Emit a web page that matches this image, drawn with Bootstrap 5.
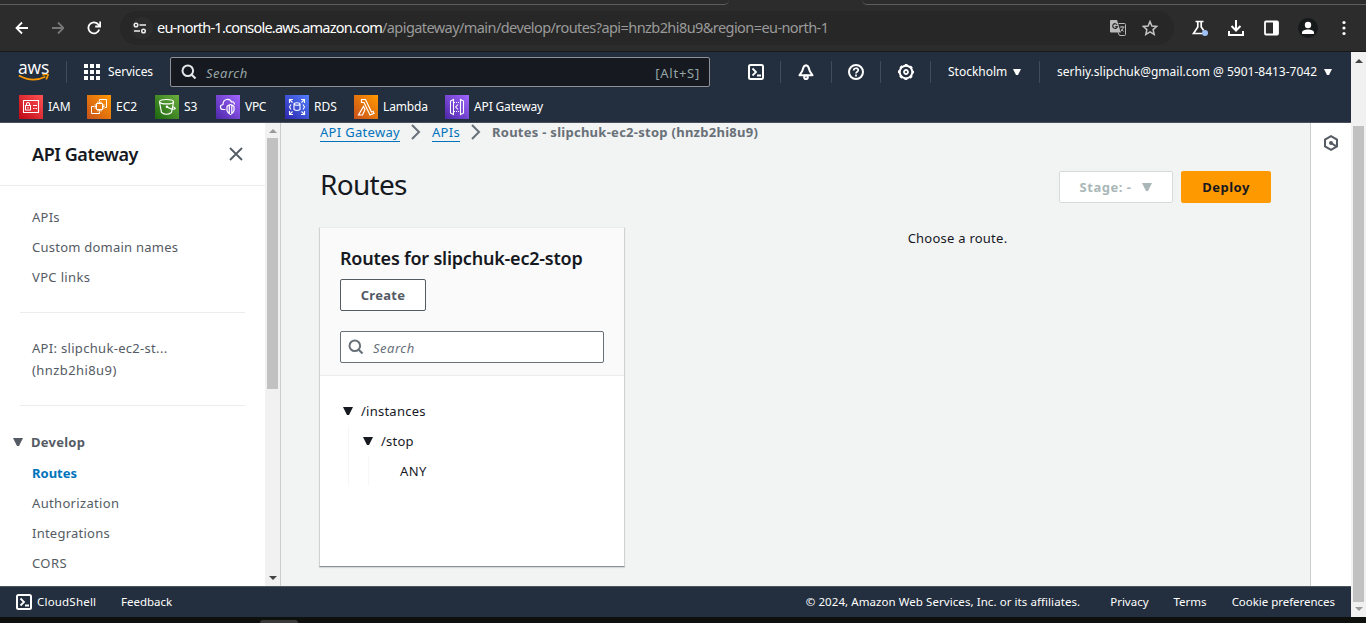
<!DOCTYPE html>
<html lang="en">
<head>
<meta charset="utf-8">
<title>API Gateway - Routes</title>
<link href="https://cdn.jsdelivr.net/npm/bootstrap@5.3.0/dist/css/bootstrap.min.css" rel="stylesheet">
<style>
body{height:623px;overflow:hidden;background:#0e100e;font:13px/22px "Noto Sans",sans-serif;letter-spacing:.24px;color:#16191f;display:flex;flex-direction:column}
svg{display:block;flex:none}
a{text-decoration:none;color:inherit}
.chrome{height:52px;background:#2c2c2c;border-bottom:1px solid #161819}
.tabstrip{height:5px;background:#2c2c2c}
.tab-l{width:729px;border-bottom:1px solid #5e5e5e;border-bottom-right-radius:7px}
.tab-r{width:504px;border-bottom:1px solid #5e5e5e;border-bottom-left-radius:7px}
.toolbar{height:46px;padding-left:14px}
.omni{height:34px;width:1054px;background:#272727;border-radius:17px;padding-left:7px}
.site{width:22px;height:22px;border-radius:50%;background:#2d2d2d}
.url{font:14.5px/20px "Noto Sans",sans-serif;color:#fff;margin:-2px 0 0 4px;white-space:nowrap;letter-spacing:-.78px}
.url span{color:#9a9a9a;letter-spacing:-.57px}
.view{height:565px}
.page-col{width:1351px}
.aws-head{height:71px;background:#232f3e;border-bottom:1px solid #4a4f5b;color:#fff;font-size:12px;line-height:16px;letter-spacing:0}
.row1{height:40px}
.vsep{width:1px;height:22px;background:#414d5c;flex:none}
.awslogo{width:31px;margin-left:18px}
.awslogo b{font:500 17.5px/12px "Open Sans",sans-serif;display:block;height:13px;margin-top:-2px;letter-spacing:-.2px}
.gsearch{width:540px;height:30px;border:1px solid #8d9096;border-radius:2px;background:#16191f;color:#95a5a6;font-size:13px;padding:0 9px 0 10px}
.txt-in{font-size:13px;letter-spacing:.5px;padding-top:2px}
.ico{width:50px}
.favs{height:30px;padding-left:19px}
.fav{gap:5px}
.side{width:265px;background:#fff;color:#545b64}
.side-head{height:63px;border-bottom:1px solid #eaeded;padding:0 21px 0 32px}
.h-side{font-size:18px;line-height:22px;font-weight:600;color:#16191f;letter-spacing:-.45px}
.side-link{height:30px;line-height:30px;padding-left:32px;display:block}
.rule{height:1px;background:#eaeded;margin:0 20px}
.sb{width:15px;background:#f1f1f1;flex:none}
.thumb{width:11px;background:#c1c1c1}
.edge{width:1px;background:#c9cdcf;flex:none}
.content-area{width:1029px;background:#f2f3f3;padding:0 39px}
.crumb{font-size:13px;line-height:18px;height:20px;letter-spacing:.3px}
.crumb a{color:#0073bb;border-bottom:1px solid #0073bb;height:19px;line-height:18px}
.title{font-size:28px;line-height:34px;font-weight:400;letter-spacing:-.7px;margin-top:-6px}
.b-aws{height:32px;border-radius:2px;font-weight:700;font-size:13px;line-height:30px;padding:0;text-align:center;border:1px solid;letter-spacing:.5px}
.panel-box{width:306px;height:340px;margin-left:-1px;border:1px solid #cfd3d3;border-top-color:#eaeded;border-bottom-color:#879196;background:#fff;box-shadow:0 1px 1px #d5d9d9}
.panel-top{height:148px;background:#fafafa;border-bottom:1px solid #eaeded;padding:19px 20px 0}
.psearch{height:32px;border:1px solid #687078;border-radius:2px;background:#fff;color:#687078;padding-left:7px}
.node{height:30px;line-height:30px}
.branch{border-left:1px solid #f7f7f7}
.foot{height:31px;background:#232f3e;border-top:1px solid #4a555c;color:#fff;font-size:11.5px;line-height:16px;letter-spacing:0}
</style>
</head>
<body>
<svg width="0" height="0" style="position:absolute"><defs>
<linearGradient id="gr" x1="0" y1="1" x2="1" y2="0"><stop stop-color="#bd0816"/><stop offset="1" stop-color="#ff5252"/></linearGradient>
<linearGradient id="go" x1="0" y1="1" x2="1" y2="0"><stop stop-color="#c8511b"/><stop offset="1" stop-color="#f90"/></linearGradient>
<linearGradient id="gg" x1="0" y1="1" x2="1" y2="0"><stop stop-color="#1b660f"/><stop offset="1" stop-color="#6cae3e"/></linearGradient>
<linearGradient id="gp" x1="0" y1="1" x2="1" y2="0"><stop stop-color="#4d27a8"/><stop offset="1" stop-color="#a166ff"/></linearGradient>
<linearGradient id="gb" x1="0" y1="1" x2="1" y2="0"><stop stop-color="#2e27ad"/><stop offset="1" stop-color="#527fff"/></linearGradient>
<symbol id="shell" viewBox="0 0 16 16"><rect x="1" y="1" width="14" height="14" rx="1.500" fill="none" stroke="#fff" stroke-width="2"/><path d="M4.500 4.500 8 8 4.500 11.500M9 11.500h4" fill="none" stroke="#fff" stroke-width="1.800"/></symbol>
<symbol id="mag" viewBox="0 0 16 16"><circle cx="6.800" cy="6.800" r="5.300" fill="none" stroke="currentColor" stroke-width="2"/><path d="m10.500 10.500 4 4" stroke="currentColor" stroke-width="2.200"/></symbol>
</defs></svg>

<header class="chrome">
  <div class="tabstrip d-flex justify-content-between"><div class="tab-l"></div><div class="tab-r"></div></div>
  <div class="toolbar d-flex align-items-center">
    <svg width="16" height="16" fill="none" stroke="#fff" stroke-width="1.800"><path d="M14 8H3M8 2.500 2.500 8 8 13.500"/></svg>
    <svg style="margin:0 23px 0 22px" width="12" height="16" viewBox="2 0 12 16" fill="none" stroke="#777" stroke-width="1.800"><path d="M2 8h11M8 2.500 13.500 8 8 13.500"/></svg>
    <svg width="14" height="16" viewBox="1 0 14 16" fill="none" stroke="#fff" stroke-width="1.800"><path d="M13.200 9.500A5.500 5.500 0 1 1 12 4.200l2 2M14.200 1.500v5h-5"/></svg>
    <div class="omni d-flex align-items-center" style="margin-left:19px">
      <div class="site d-flex align-items-center justify-content-center" style="margin-left:4px"><svg style="margin-right:8px;margin-left:4px" width="14" height="12" fill="none" stroke="#eee" stroke-width="1.500"><circle cx="3" cy="3" r="1.800"/><path d="M6.500 3H13M1 9h6"/><circle cx="10.500" cy="9" r="1.800"/></svg></div>
      <div class="url">eu-north-1.console.aws.amazon.com<span>/apigateway/main/develop/routes?api=hnzb2hi8u9&amp;region=eu-north-1</span></div>
      <svg class="ms-auto" width="18" height="18" viewBox="0 0 18 18"><path d="M9.500 4.500H15.500q1 0 1 1v10q0 1-1 1H10.500L9 13.500" fill="none" stroke="#bbb"/><path d="M2 1h6l3.800 12.500H2q-1 0-1-1V2q0-1 1-1z" fill="#bbb"/><path d="M8 5.800a2.300 2.300 0 1 0 .3 1.700H6.300" fill="none" stroke="#272727" stroke-width="1.200"/><path d="M11 8h4.500M13 7v1M14.500 8q-.5 2.500-2.800 4.500M12.200 9.800l2.300 2.700" fill="none" stroke="#bbb"/></svg>
      <svg style="margin:0 16px 0 15px" width="16" height="16" viewBox="0 0 16 16"><path d="m8 1.500 1.900 4.500 4.900.4-3.700 3.200 1.100 4.800L8 11.900l-4.200 2.500 1.100-4.800L1.200 6.400 6.100 6z" fill="none" stroke="#c4c4c4" stroke-width="1.500"/></svg>
    </div>
    <svg style="margin-left:17px" width="18" height="18" viewBox="0 0 18 18"><path d="M4.500 2.500h8M6.800 3v5L2.500 14.500h9M10.200 3v5l2.500 3.500" fill="none" stroke="#fff" stroke-width="1.700"/><circle cx="14" cy="14" r="3" fill="#a0c2f9"/></svg>
    <svg style="margin-left:18px" width="18" height="18" fill="none" stroke="#fff" stroke-width="2"><path d="M9 1v10M4.500 7 9 11.500 13.500 7M2 12v4h14v-4"/></svg>
    <svg style="margin-left:19px" width="16" height="16"><rect x="1" y="1.500" width="13" height="13" rx="1" fill="none" stroke="#fff" stroke-width="1.800"/><path d="M9 1h5v14H9z" fill="#fff"/></svg>
    <svg style="margin-left:18px" width="20" height="20"><circle cx="10" cy="10" r="10" fill="#171a1b"/><circle cx="10" cy="7" r="3.200" fill="#fff"/><path d="M4 16v-1.500c0-2 3-3 6-3s6 1 6 3V16z" fill="#fff"/></svg>
    <svg style="margin-left:24px" width="4" height="16" fill="#fff"><circle cx="2" cy="2.500" r="1.600"/><circle cx="2" cy="8" r="1.600"/><circle cx="2" cy="13.500" r="1.600"/></svg>
  </div>
</header>

<div class="view d-flex">
  <div class="page-col d-flex flex-column">
    <nav class="aws-head">
      <div class="row1 d-flex align-items-center">
        <div class="awslogo"><b>aws</b><svg width="32" height="8" fill="none" stroke="#f90" stroke-width="1.700"><path d="M.8 1.500q14 7.500 26.500 1.200M24.500 1q6-1.500 5.500 0t-1.800 4.500"/></svg></div>
        <div class="vsep" style="margin:0 17px"></div>
        <svg width="16" height="16" fill="#fff"><path d="M0 0h4v4H0zM6 0h4v4H6zM12 0h4v4h-4zM0 6h4v4H0zM6 6h4v4H6zM12 6h4v4h-4zM0 12h4v4H0zM6 12h4v4H6zM12 12h4v4h-4z"/></svg>
        <span style="margin-left:8px;width:62px;letter-spacing:-.1px">Services</span>
        <div class="gsearch d-flex align-items-center"><svg width="16" height="16" style="color:#e6e9eb"><use href="#mag"/></svg><i class="txt-in" style="margin-left:9px">Search</i><span class="ms-auto txt-in" style="letter-spacing:.75px">[Alt+S]</span></div>
        <svg style="margin:0 16px 0 38px" width="16" height="16"><use href="#shell"/></svg>
        <div class="vsep"></div>
        <div class="ico d-flex justify-content-center"><svg width="16" height="16" fill="none" stroke="#fff" stroke-width="2"><path d="M8 1.300C5 1.500 5 5 4.300 7L1.500 11.300h13L11.700 7C11 5 11 1.500 8 1.300z" stroke-linejoin="round"/><circle cx="8" cy="13.200" r="1.800" fill="#232f3e"/></svg></div>
        <div class="vsep"></div>
        <div class="ico d-flex justify-content-center" style="width:48px"><svg width="16" height="16" fill="none" stroke="#fff" stroke-width="2"><circle cx="8" cy="8" r="7"/><path d="M5.700 6.500c0-3 4.700-3 4.600-.2C10.200 7.800 8 7.700 8 9.500M8 10.500v2" stroke-width="1.700"/></svg></div>
        <div class="vsep"></div>
        <div class="ico d-flex justify-content-center" style="width:49px"><svg width="18" height="18" viewBox="-9 -9 18 18" fill="none" stroke="#fff"><circle r="6.300" stroke-width="2"/><circle r="7.300" stroke-width="1.500" stroke-dasharray="2.870 2.863" stroke-dashoffset="1.430"/><circle r="2" stroke-width="1.800"/></svg></div>
        <div class="vsep"></div>
        <span style="margin-left:17px;width:59px">Stockholm</span>
        <svg style="margin:0 18px 0 6px" width="8" height="6" fill="#fff"><path d="M0 0h8L5 6H3z"/></svg>
        <div class="vsep"></div>
        <span style="margin-left:17px;width:262px" class="text-nowrap">serhiy.slipchuk@gmail.com @ 5901-8413-7042</span>
        <svg style="margin-left:5px" width="8" height="6" fill="#fff"><path d="M0 0h8L5 6H3z"/></svg>
      </div>
      <div class="favs d-flex align-items-center">
        <div class="fav d-flex align-items-center" style="width:68px"><svg width="24" height="24" fill="none" stroke="#fff" stroke-width="1.100"><path fill="url(#gr)" stroke="none" d="M0 0h24v24H0z"/><path d="M4.500 5.500h15v12h-15zM6.500 10.500h5v4.500h-5zM7.500 10.500V8.500q1.500-2 3 0v2M9 12v1.500M14 10.500h4M14 13.500h1.500M16.500 13.500H18"/></svg><span>IAM</span></div>
        <div class="fav d-flex align-items-center" style="width:68px"><svg width="24" height="24" fill="none" stroke="#fff"><path fill="url(#go)" stroke="none" d="M0 0h24v24H0z"/><path d="M12.500 6V4.500h7v8H18M7 11.500H4.500v7h8V17M9.500 8.500h6v6h-6zM11 8.500v-2M12.500 8.500v-2M14 8.500v-2M11 14.500v2M12.500 14.500v2M14 14.500v2M9.500 10h-2M9.500 11.500h-2M9.500 13h-2M15.500 10h2M15.500 11.500h2M15.500 13h2"/></svg><span>EC2</span></div>
        <div class="fav d-flex align-items-center" style="width:61px"><svg width="24" height="24" fill="none" stroke="#fff" stroke-width="1.200"><path fill="url(#gg)" stroke="none" d="M0 0h24v24H0z"/><ellipse cx="11.500" cy="6.700" rx="7" ry="2.200"/><path d="m4.500 7 2 10.500q5 3.500 10 0l2-10.500M12 12q4 2.500 7 2.200t-1.500-3"/><circle cx="12" cy="11.800" r=".7"/></svg><span>S3</span></div>
        <div class="fav d-flex align-items-center" style="width:69px;letter-spacing:-.3px"><svg width="24" height="24" fill="none" stroke="#fff" stroke-width="1.200"><path fill="url(#gp)" stroke="none" d="M0 0h24v24H0z"/><path d="M9.500 14.500H7.500c-4 0-4-4.500-.5-5C7 3.500 14 3 15.500 7q2.500-1 3 2.500"/><path d="M14.500 9.500q-3 1-3.500 2v4q1 3 3.500 4 2.500-1 3.500-4v-4q-.5-1-3.500-2zM13.300 10v9M15.800 10v9"/></svg><span>VPC</span></div>
        <div class="fav d-flex align-items-center" style="width:69px"><svg width="24" height="24" fill="none" stroke="#fff" stroke-width="1.100"><path fill="url(#gb)" stroke="none" d="M0 0h24v24H0z"/><path d="M4.500 8V4.500H8M4.500 4.500l3 3M16 4.500h3.500V8M19.500 4.500l-3 3M4.500 16v3.500H8M4.500 19.500l3-3M16 19.500h3.500V16M19.500 19.500l-3-3M6 9.500 4.500 12 6 14.500M18 9.500l1.500 2.500-1.500 2.500M9 9.500v5q3 2 6 0v-5"/><ellipse cx="12" cy="9" rx="3" ry="1.200"/></svg><span>RDS</span></div>
        <div class="fav d-flex align-items-center" style="width:91px;letter-spacing:-.15px"><svg width="24" height="24" fill="none" stroke="#fff" stroke-width="1.200"><path fill="url(#go)" stroke="none" d="M0 0h24v24H0z"/><path d="M7.500 4.500h4l6 12.500 1.700-.6.800 2-4 1.600L10 7.500H7.500zM9.500 11.500l1.500 3L8.500 20h-4z"/></svg><span>Lambda</span></div>
        <div class="fav d-flex align-items-center" style="letter-spacing:-.15px"><svg width="24" height="24" fill="none" stroke="#fff" stroke-width="1.100"><path fill="url(#gp)" stroke="none" d="M0 0h24v24H0z"/><path d="M8.500 4.500v15l-3-1.500V6zM15.500 4.500v15l3-1.500V6zM13 9.500 10.700 12l2.300 2.500"/><path stroke-dasharray="1 1" d="M9 7.500h6M9 16.500h6"/></svg><span>API Gateway</span></div>
      </div>
    </nav>

    <div class="d-flex" style="height:463px">
      <aside class="side">
        <div class="side-head d-flex align-items-center justify-content-between"><span class="h-side">API Gateway</span><svg width="16" height="16" stroke="#545b64" stroke-width="1.800"><path d="m2 2 12 12M14 2 2 14"/></svg></div>
        <div style="padding:16px 0 20px"><a href="#" class="side-link">APIs</a><a href="#" class="side-link">Custom domain names</a><a href="#" class="side-link" style="letter-spacing:.35px">VPC links</a></div>
        <div class="rule"></div>
        <div style="padding:24px 0 24px 32px;height:92px"><span style="letter-spacing:.31px">API: slipchuk-ec2-st...</span><br><span style="letter-spacing:.42px">(hnzb2hi8u9)</span></div>
        <div class="rule"></div>
        <div class="d-flex align-items-center fw-bold" style="padding-left:13px;margin:21px 0 1px;height:30px"><svg width="10" height="8" fill="#545b64" style="margin-right:8px"><path d="M0 0h10L6 8H4z"/></svg>Develop</div>
        <a href="#" class="side-link fw-bold" style="color:#0073bb;letter-spacing:0">Routes</a><a href="#" class="side-link" style="letter-spacing:.33px">Authorization</a><a href="#" class="side-link">Integrations</a><a href="#" class="side-link" style="letter-spacing:.4px">CORS</a>
      </aside>
      <div class="sb d-flex flex-column align-items-center">
        <svg style="margin:6px 0 5px" width="8" height="4" fill="#9a9a9a"><path d="M4 0 8 4H0z"/></svg><div class="thumb" style="height:251px"></div>
        <svg class="mt-auto" style="margin-bottom:6px" width="8" height="4" fill="#444"><path d="M0 0h8L4 4z"/></svg>
      </div>
      <div class="edge"></div>
      <main class="content-area">
        <div class="crumb d-flex"><a href="#">API Gateway</a><svg width="32" height="18" fill="none" stroke="#687078" stroke-width="2"><path d="m12 2 7 7-7 7"/></svg><a href="#">APIs</a><svg width="32" height="18" fill="none" stroke="#687078" stroke-width="2"><path d="m12 2 7 7-7 7"/></svg><b style="color:#687078;letter-spacing:.27px">Routes - slipchuk-ec2-stop (hnzb2hi8u9)</b></div>
        <div class="d-flex align-items-center" style="margin-top:25px;height:38px">
          <h1 class="title mb-0 me-auto">Routes</h1>
          <button class="btn b-aws d-flex align-items-center justify-content-center" style="width:114px;background:#fff;border-color:#d5dbdb;color:#aab7b8"><span>Stage: -</span><svg style="margin-left:11px" width="10" height="8" fill="#aab7b8"><path d="M0 0h10L6 8H4z"/></svg></button>
          <button class="btn b-aws ms-2" style="width:90px;background:#f90;border-color:#f90;color:#16191f">Deploy</button>
        </div>
        <div class="d-flex" style="margin-top:21px">
          <section class="panel-box">
            <div class="panel-top">
              <h2 class="h-side mb-0 text-nowrap" style="letter-spacing:-.22px">Routes for slipchuk-ec2-stop</h2>
              <button class="btn b-aws" style="width:86px;margin:10px 0 20px;background:#fff;border-color:#545b64;color:#545b64;display:block;letter-spacing:.3px">Create</button>
              <div class="psearch d-flex align-items-center"><svg width="16" height="16"><use href="#mag"/></svg><i class="txt-in" style="margin-left:9px">Search</i></div>
            </div>
            <div style="padding:20px 23px">
              <div class="node d-flex align-items-center"><svg style="margin-right:8px" width="10" height="8" fill="#16191f"><path d="M0 0h10L6 8H4z"/></svg>/instances</div>
              <div class="branch" style="margin-left:5px;padding-left:14px">
                <div class="node d-flex align-items-center"><svg style="margin-right:8px" width="10" height="8" fill="#16191f"><path d="M0 0h10L6 8H4z"/></svg>/stop</div>
                <div class="branch node" style="margin-left:5px;padding-left:31px;letter-spacing:.4px">ANY</div>
              </div>
            </div>
          </section>
          <div class="flex-grow-1 text-center" style="padding-left:19px">Choose a route.</div>
        </div>
      </main>
      <div class="edge"></div>
      <div class="bg-white flex-grow-1 d-flex justify-content-center" style="padding-top:12px"><svg width="16" height="16" fill="none" stroke="#545b64" stroke-width="2"><path d="m8 1.200 6 3.300v7l-6 3.300-6-3.300v-7z"/><circle cx="8" cy="8" r="2" fill="#545b64" stroke="none"/><path d="m8 8 5 3.200"/></svg></div>
    </div>

    <footer class="foot d-flex align-items-center">
      <svg style="margin:0 5px 0 16px" width="16" height="16"><use href="#shell"/></svg><span style="width:84px;letter-spacing:.2px">CloudShell</span><span>Feedback</span>
      <span class="ms-auto" style="margin-right:30px;letter-spacing:.07px">© 2024, Amazon Web Services, Inc. or its affiliates.</span><span style="margin-right:25px">Privacy</span><span style="margin-right:25px">Terms</span><span style="margin-right:16px;letter-spacing:-.03px">Cookie preferences</span>
    </footer>
  </div>
  <div class="sb d-flex flex-column align-items-center">
    <svg style="margin:7px 0 63px" width="8" height="4" fill="#444"><path d="M4 0 8 4H0z"/></svg><div class="thumb" style="height:476px"></div>
    <svg style="margin-top:5px" width="8" height="4" fill="#9a9a9a"><path d="M0 0h8L4 4z"/></svg>
  </div>
</div>
<div class="d-flex" style="height:6px;padding-left:260px"><div class="mt-auto" style="width:38px;height:3px;background:#3a3a3a;border-radius:10px 10px 0 0"></div></div>
<script src="https://cdn.jsdelivr.net/npm/bootstrap@5.3.0/dist/js/bootstrap.bundle.min.js"></script>
</body>
</html>
